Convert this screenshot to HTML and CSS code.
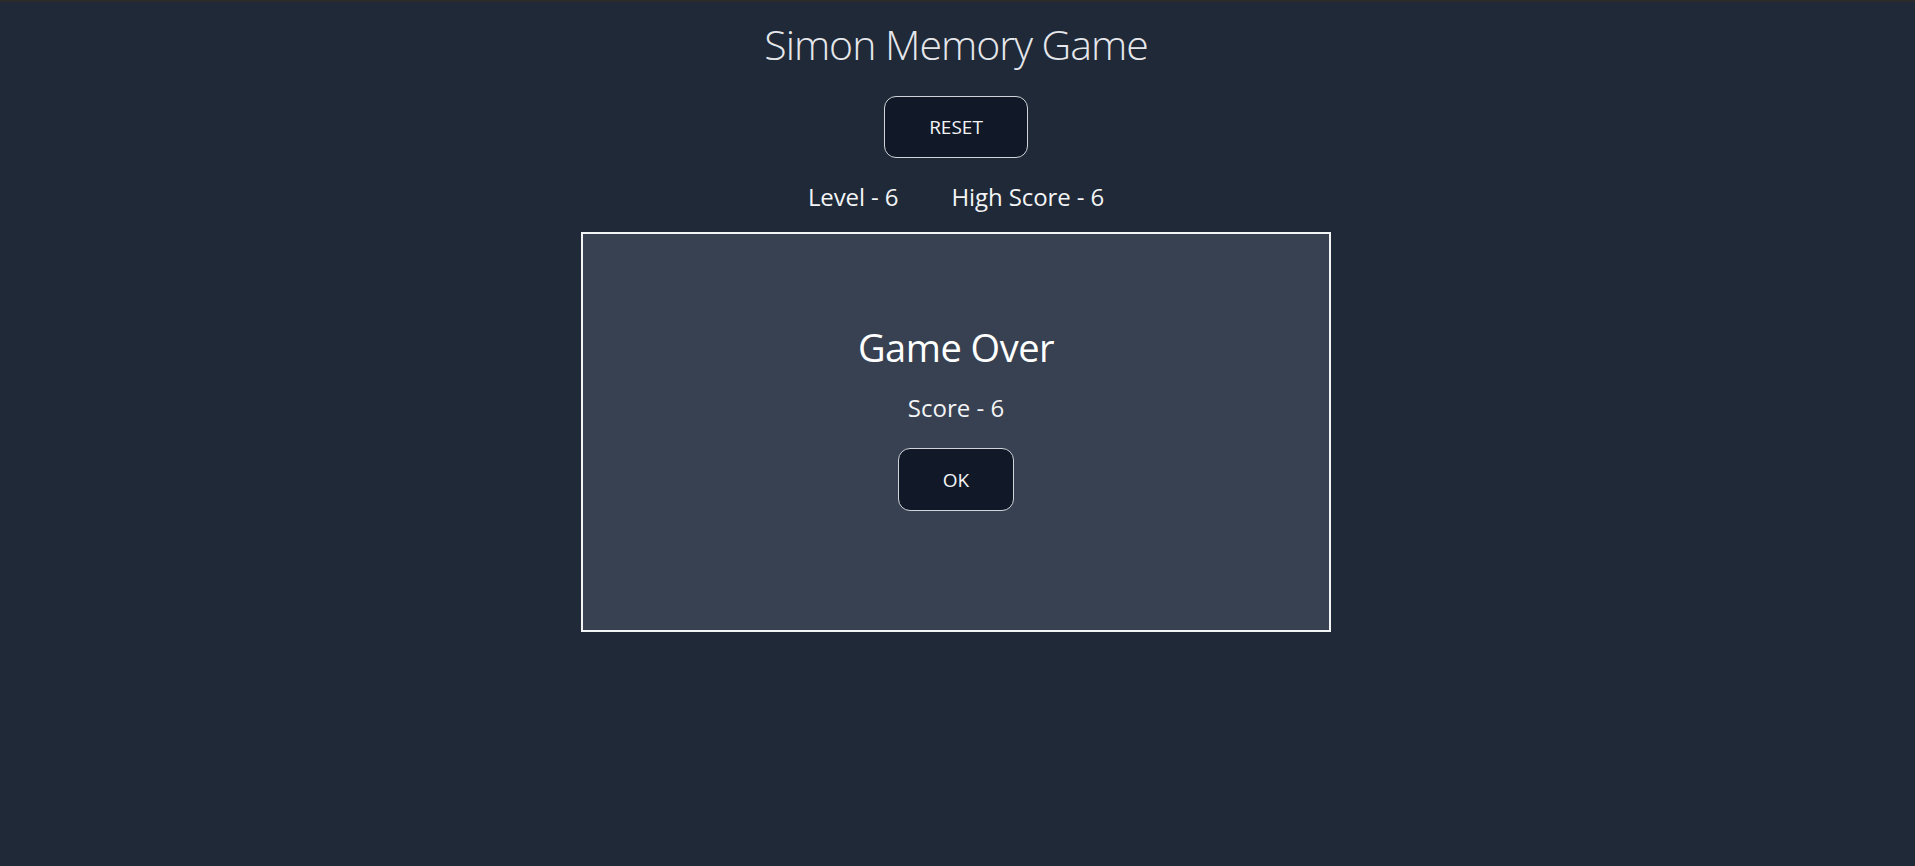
FILE: index.html
```html
<!DOCTYPE html>
<html lang="en">
<head>
<meta charset="utf-8">
<title>Simon Memory Game</title>
<link rel="stylesheet" href="styles.css">
</head>
<body>
<main class="app">
  <h1 class="title">Simon Memory Game</h1>
  <button class="btn btn-reset" type="button">RESET</button>
  <div class="stats">
    <span class="stat">Level - 6</span>
    <span class="stat">High Score - 6</span>
  </div>
  <section class="board">
    <h2 class="over-title">Game Over</h2>
    <p class="over-score">Score - 6</p>
    <button class="btn btn-ok" type="button">OK</button>
  </section>
</main>
</body>
</html>
```

FILE: styles.css
```css
html, body {
  margin: 0;
  padding: 0;
}
html {
  background: #1f2937;
}
body {
  background: #1f2937;
  border-top: 2px solid #2b2b2c;
  font-family: "Open Sans", "Noto Sans", sans-serif;
  color: #f3f4f6;
}
.app {
  display: flex;
  flex-direction: column;
  align-items: center;
  padding-right: 3px;
}
.title {
  margin: 17px 0 0;
  font-size: 41px;
  line-height: 50px;
  font-weight: 300;
  letter-spacing: -1px;
  color: #e5e7eb;
}
.btn {
  font-family: inherit;
  background: #111827;
  color: #f3f4f6;
  border: 1px solid #d1d5db;
  border-radius: 12px;
  font-size: 19px;
  cursor: pointer;
}
.btn-reset {
  margin-top: 27px;
  width: 144px;
  height: 62px;
}
.stats {
  display: flex;
  gap: 53px;
  margin-top: 24px;
  font-size: 24px;
  line-height: 30px;
  letter-spacing: -0.1px;
}
.board {
  margin-top: 20px;
  box-sizing: border-box;
  width: 750px;
  height: 400px;
  border: 2px solid #f3f4f6;
  background: #374151;
  display: flex;
  flex-direction: column;
  align-items: center;
  padding-top: 89px;
}
.over-title {
  margin: 0;
  font-size: 38px;
  line-height: 48px;
  font-weight: 500;
  letter-spacing: -0.5px;
  color: #ffffff;
}
.over-score {
  margin: 22px 0 0;
  font-size: 24px;
  line-height: 30px;
}
.btn-ok {
  margin-top: 25px;
  width: 116px;
  height: 63px;
}
```
